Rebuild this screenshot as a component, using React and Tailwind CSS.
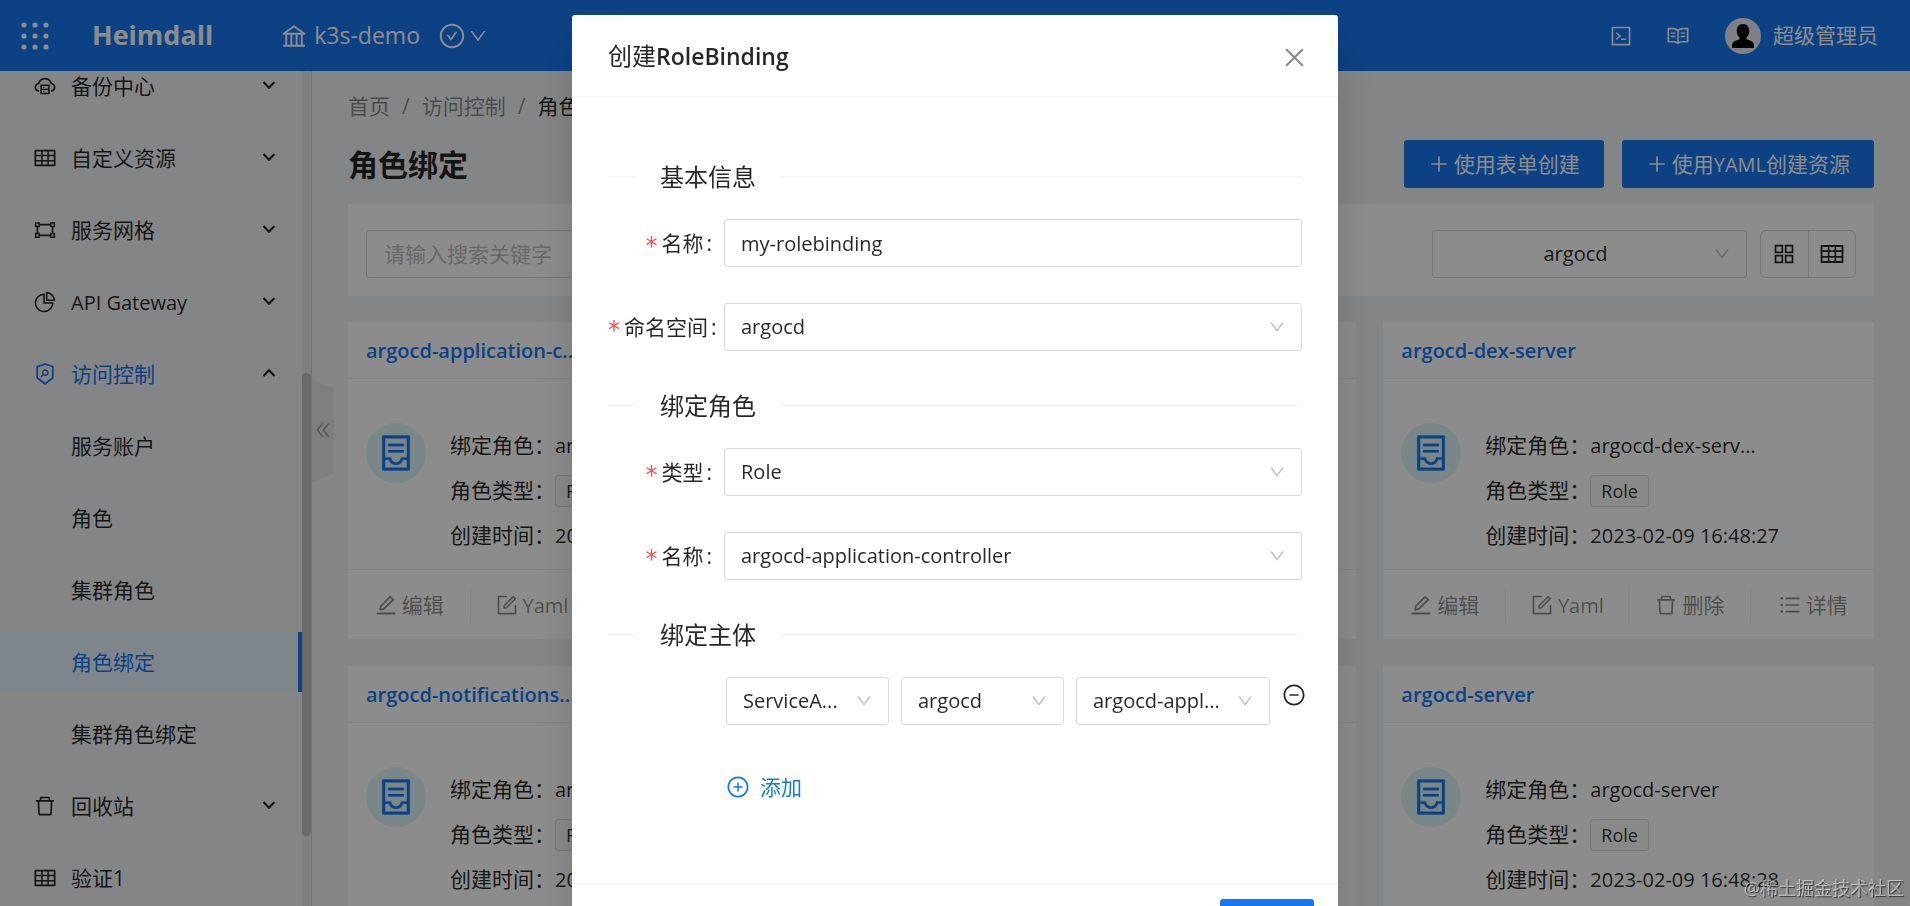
import React from 'react';
import {
  AiOutlineAppstore,
  AiOutlineBank,
  AiOutlineCheckCircle,
  AiOutlineClose,
  AiOutlineCloudServer,
  AiOutlineCode,
  AiOutlineContainer,
  AiOutlineDelete,
  AiOutlineDoubleLeft,
  AiOutlineDown,
  AiOutlineEdit,
  AiOutlineForm,
  AiOutlineGateway,
  AiOutlineMinusCircle,
  AiOutlinePieChart,
  AiOutlinePlus,
  AiOutlinePlusCircle,
  AiOutlineRead,
  AiOutlineSecurityScan,
  AiOutlineTable,
  AiOutlineUnorderedList,
} from 'react-icons/ai';

const MENU = [
  { label: '备份中心', icon: AiOutlineCloudServer, arrow: 'down' },
  { label: '自定义资源', icon: AiOutlineTable, arrow: 'down' },
  { label: '服务网格', icon: AiOutlineGateway, arrow: 'down' },
  { label: 'API Gateway', icon: AiOutlinePieChart, arrow: 'down', latin: true },
  { label: '访问控制', icon: AiOutlineSecurityScan, arrow: 'up', open: true },
  { label: '服务账户' },
  { label: '角色' },
  { label: '集群角色' },
  { label: '角色绑定', active: true },
  { label: '集群角色绑定' },
  { label: '回收站', icon: AiOutlineDelete, arrow: 'down' },
  { label: '验证1', icon: AiOutlineTable },
];

const CARDS = [
  { title: 'argocd-application-c...', role: 'argocd-appli...', time: '2023-02-09 16:48:27' },
  { title: 'argocd-applicationset...', role: 'argocd-appli...', time: '2023-02-09 16:48:27' },
  { title: 'argocd-dex-server', role: 'argocd-dex-serv...', time: '2023-02-09 16:48:27' },
  { title: 'argocd-notifications...', role: 'argocd-notifi...', time: '2023-02-09 16:48:28' },
  { title: 'argocd-redis', role: 'argocd-redis', time: '2023-02-09 16:48:28' },
  { title: 'argocd-server', role: 'argocd-server', time: '2023-02-09 16:48:28' },
];

const ACTIONS = [
  { label: '编辑', icon: AiOutlineEdit },
  { label: 'Yaml', icon: AiOutlineForm, latin: true },
  { label: '删除', icon: AiOutlineDelete },
  { label: '详情', icon: AiOutlineUnorderedList },
];

function DotsIcon() {
  const steps = [3, 14, 25];
  return (
    <svg viewBox="0 0 28 28" className="size-7" fill="currentColor" aria-hidden="true">
      {steps.map((y) => steps.map((x) => <circle key={`${x}-${y}`} cx={x} cy={y} r="2.6" />))}
    </svg>
  );
}

function Chevron({ up }) {
  return (
    <svg viewBox="0 0 14 10" className="h-[10px] w-[14px]" fill="none" stroke="currentColor" strokeWidth="2" aria-hidden="true">
      <path d={up ? 'M1.500 8 L7 2.200 L12.500 8' : 'M1.500 2 L7 7.800 L12.500 2'} />
    </svg>
  );
}

function Avatar() {
  return (
    <svg viewBox="0 0 36 36" className="size-9" aria-hidden="true">
      <circle cx="18" cy="18" r="18" fill="#e9ebf5" />
      <path
        d="M18 6c-4 0-6.300 2.800-6.300 6.800 0 2.900 1.100 5.400 2.900 6.900v1.500c-3.800 1.300-7.600 2.200-7.600 6V30h22v-2.800c0-3.800-3.800-4.700-7.600-6v-1.500c1.800-1.500 2.900-4 2.900-6.900C24.300 8.800 22 6 18 6z"
        fill="#000"
      />
    </svg>
  );
}

function Header() {
  return (
    <header className="z-10 flex h-[71px] shrink-0 items-center bg-[#1677f1] pl-[21px] pr-8 text-white">
      <button type="button" aria-label="应用" className="mr-[43px]">
        <DotsIcon />
      </button>
      <a href="#home" className="mr-[67px] text-[27px] font-bold">Heimdall</a>
      <button type="button" className="flex items-center text-[23px]">
        <AiOutlineBank className="mr-1.5 size-7" />
        k3s-demo
        <AiOutlineCheckCircle className="ml-[18px] mr-0.5 size-7" />
        <AiOutlineDown className="size-5" />
      </button>
      <div className="ml-auto flex items-center gap-[33px]">
        <button type="button" aria-label="终端"><AiOutlineCode className="size-6" /></button>
        <button type="button" aria-label="文档" className="mr-0.5"><AiOutlineRead className="size-6" /></button>
        <button type="button" className="flex items-center gap-3 pt-px">
          <Avatar />
          超级管理员
        </button>
      </div>
    </header>
  );
}

function Sidebar() {
  return (
    <aside className="flex w-[312px] shrink-0 border-r border-[#d0d2d6]">
      <nav className="-mt-[15px] flex flex-1 flex-col gap-3">
        {MENU.map((item) => {
          const Icon = item.icon;
          const tone = item.active || item.open ? 'text-[#1677f1]' : 'text-black/85';
          return (
            <a
              key={item.label}
              href="#menu"
              className={`flex h-[60px] shrink-0 items-center pl-[33px] pr-[26px] ${tone} ${item.active ? 'border-r-4 border-[#1677f1] bg-[#e6f4ff]' : ''}`}
            >
              <span className="mr-[14px] size-6">{Icon && <Icon className="size-6" />}</span>
              <span className={`flex-1 pt-0.5 ${item.latin ? 'text-xl' : ''}`}>{item.label}</span>
              {item.arrow && <span className="pb-0.5 text-black/85"><Chevron up={item.arrow === 'up'} /></span>}
            </a>
          );
        })}
      </nav>
      <div className="w-[9px] bg-[#e6e8eb]">
        <div className="mt-[302px] h-[463px] rounded-full bg-[#bfc1c4]" />
      </div>
    </aside>
  );
}

function Card({ card }) {
  return (
    <article className="bg-white">
      <h2 className="border-b border-[#f0f0f0] px-[18px] pb-[11px] pt-[13px] text-xl/8 font-semibold text-[#1677f1]">{card.title}</h2>
      <div className="flex h-[190px] gap-6 px-[18px] pt-11">
        <span className="flex size-[60px] shrink-0 items-center justify-center rounded-full bg-[#dff6fa] text-[#1677f1]">
          <AiOutlineContainer className="size-10 stroke-[8px]" />
        </span>
        <dl className="grid auto-rows-[45px] grid-cols-[105px_1fr] items-center whitespace-nowrap">
          <dt>绑定角色：</dt>
          <dd className="text-xl">{card.role}</dd>
          <dt>角色类型：</dt>
          <dd><span className="inline-block rounded-[3px] border border-[#d9d9d9] bg-[#fafafa] px-2.5 align-middle text-lg/[30px]">Role</span></dd>
          <dt>创建时间：</dt>
          <dd className="text-xl">{card.time}</dd>
        </dl>
      </div>
      <div className="grid h-[70px] grid-cols-4 items-center divide-x divide-[#f0f0f0] border-t border-[#f0f0f0] text-black/45">
        {ACTIONS.map(({ label, icon: Icon, latin }) => (
          <button key={label} type="button" className="flex h-9 items-center justify-center gap-1">
            <Icon className="size-6" />
            <span className={`pt-0.5 ${latin ? 'text-xl' : ''}`}>{label}</span>
          </button>
        ))}
      </div>
    </article>
  );
}

function Page() {
  return (
    <main className="flex min-w-0 flex-1">
      <button type="button" aria-label="收起菜单" className="relative -mr-[22px] mt-[309px] h-[102px] w-[22px] shrink-0 text-black/30">
        <svg viewBox="0 0 22 102" className="h-[102px] w-[22px]" aria-hidden="true">
          <path d="M0 0 L17 6 Q22 8 22 13 V89 Q22 94 17 96 L0 102 Z" fill="#e6e8ec" />
        </svg>
        <AiOutlineDoubleLeft className="absolute left-px top-10 size-5" />
      </button>
      <div className="min-w-0 flex-1 px-9 pt-[18px]">
        <nav className="flex h-9 items-center gap-3 text-black/45">
          <a href="#home">首页</a>
          <span>/</span>
          <a href="#access">访问控制</a>
          <span>/</span>
          <span className="text-black/85">角色绑定</span>
        </nav>
        <div className="mt-[15px] flex items-center gap-[18px]">
          <h1 className="mr-auto pt-0.5 text-3xl font-bold">角色绑定</h1>
          <button type="button" className="flex h-12 items-center gap-1 rounded-[3px] bg-[#1677f1] px-6 text-white">
            <AiOutlinePlus className="size-[22px]" />
            <span className="pt-0.5">使用表单创建</span>
          </button>
          <button type="button" className="flex h-12 items-center gap-1 rounded-[3px] bg-[#1677f1] px-6 text-white">
            <AiOutlinePlus className="size-[22px]" />
            <span className="pt-0.5">使用<span className="text-xl">YAML</span>创建资源</span>
          </button>
        </div>
        <div className="mt-4 flex items-center bg-white px-[18px] pb-[18px] pt-[26px]">
          <input
            aria-label="搜索"
            placeholder="请输入搜索关键字"
            className="mr-auto h-12 w-[360px] rounded-[3px] border border-[#d9d9d9] px-[17px] placeholder:text-[#bfbfbf]"
          />
          <Select label="命名空间筛选" value="argocd" className="w-[315px]" center />
          <div className="ml-[13px] flex h-12 w-24 divide-x divide-[#d9d9d9] rounded-md border border-[#d9d9d9]">
            <button type="button" aria-label="卡片视图" className="flex flex-1 items-center justify-center"><AiOutlineAppstore className="size-[26px]" /></button>
            <button type="button" aria-label="表格视图" className="flex flex-1 items-center justify-center"><AiOutlineTable className="size-[26px]" /></button>
          </div>
        </div>
        <div className="mt-[26px] grid grid-cols-3 gap-[27px]">
          {CARDS.map((card) => <Card key={card.title} card={card} />)}
        </div>
      </div>
    </main>
  );
}

function Select({ id, label, value, className, center }) {
  return (
    <div className={`relative ${className}`}>
      <select
        id={id}
        aria-label={label}
        className={`h-12 w-full appearance-none rounded-[3px] border border-[#d9d9d9] bg-white pl-4 text-xl text-black/85 ${center ? 'pr-11 text-center' : ''}`}
      >
        <option>{value}</option>
      </select>
      <AiOutlineDown className="pointer-events-none absolute right-4 top-[15px] size-[18px] text-black/25" />
    </div>
  );
}

function Section({ children }) {
  return (
    <div className="mb-6 flex items-center">
      <span className="w-7 border-t border-[#f0f0f0]" />
      <h3 className="px-6 text-2xl/[37px]">{children}</h3>
      <span className="flex-1 border-t border-[#f0f0f0]" />
    </div>
  );
}

function Field({ id, label, children }) {
  return (
    <div className="mb-9 flex items-center">
      <label htmlFor={id} className="flex w-[116px] shrink-0 items-center justify-end-safe whitespace-nowrap pr-3 pt-0.5">
        <span className="mr-1 pt-1 font-['DejaVu_Sans'] text-2xl/6 text-[#ff4d4f]">*</span>
        {label}
        <span className="ml-[3px]">:</span>
      </label>
      {children}
    </div>
  );
}

function Dialog() {
  return (
    <div className="fixed inset-0 z-20 overflow-hidden bg-black/45 pt-[15px]">
      <div role="dialog" aria-labelledby="dialog-title" className="mx-auto w-[766px] rounded-[3px] bg-white shadow-2xl">
        <div className="flex items-center justify-between border-b border-[#f0f0f0] px-9 pb-[23px] pt-6">
          <h2 id="dialog-title" className="text-2xl/[33px]">创建<span className="text-[23px] font-semibold">RoleBinding</span></h2>
          <button type="button" aria-label="关闭" className="-mr-1.5 pt-0.5 text-black/45"><AiOutlineClose className="size-[27px]" /></button>
        </div>
        <form className="px-9 pb-[78px] pt-[61px]">
          <Section>基本信息</Section>
          <Field id="name" label="名称">
            <input id="name" defaultValue="my-rolebinding" className="h-12 min-w-0 flex-1 rounded-[3px] border border-[#d9d9d9] px-4 text-xl" />
          </Field>
          <Field id="namespace" label="命名空间">
            <Select id="namespace" value="argocd" className="flex-1" />
          </Field>
          <Section>绑定角色</Section>
          <Field id="kind" label="类型">
            <Select id="kind" value="Role" className="flex-1" />
          </Field>
          <Field id="role" label="名称">
            <Select id="role" value="argocd-application-controller" className="flex-1" />
          </Field>
          <Section>绑定主体</Section>
          <div className="flex gap-3 pl-[118px]">
            <Select label="主体类型" value="ServiceA..." className="w-[163px]" />
            <Select label="主体命名空间" value="argocd" className="w-[163px]" />
            <Select label="主体名称" value="argocd-appl..." className="w-[194px]" />
            <button type="button" aria-label="移除" className="-mr-3 h-9"><AiOutlineMinusCircle className="size-6" /></button>
          </div>
          <button type="button" className="ml-[118px] mt-11 flex h-9 items-center gap-2.5 text-[#1677f1]">
            <AiOutlinePlusCircle className="size-6" />
            <span className="pt-0.5">添加</span>
          </button>
        </form>
        <div className="flex justify-end border-t border-[#f0f0f0] px-6 py-[15px]">
          <button type="button" className="h-12 rounded-[3px] bg-[#1677f1] px-[26px] text-white">确定</button>
        </div>
      </div>
    </div>
  );
}

export default function App() {
  return (
    <div className="flex h-screen flex-col overflow-hidden bg-[#f0f2f5] font-['Open_Sans','Noto_Sans_CJK_SC',sans-serif] text-[21px] text-black/85">
      <Header />
      <div className="flex min-h-0 flex-1 overflow-hidden">
        <Sidebar />
        <Page />
      </div>
      <Dialog />
      <p className="pointer-events-none fixed bottom-1.5 right-1.5 z-30 text-lg/6 text-white/50 [text-shadow:1px_1px_1px_rgb(0_0_0/0.6)]">@稀土掘金技术社区</p>
    </div>
  );
}
